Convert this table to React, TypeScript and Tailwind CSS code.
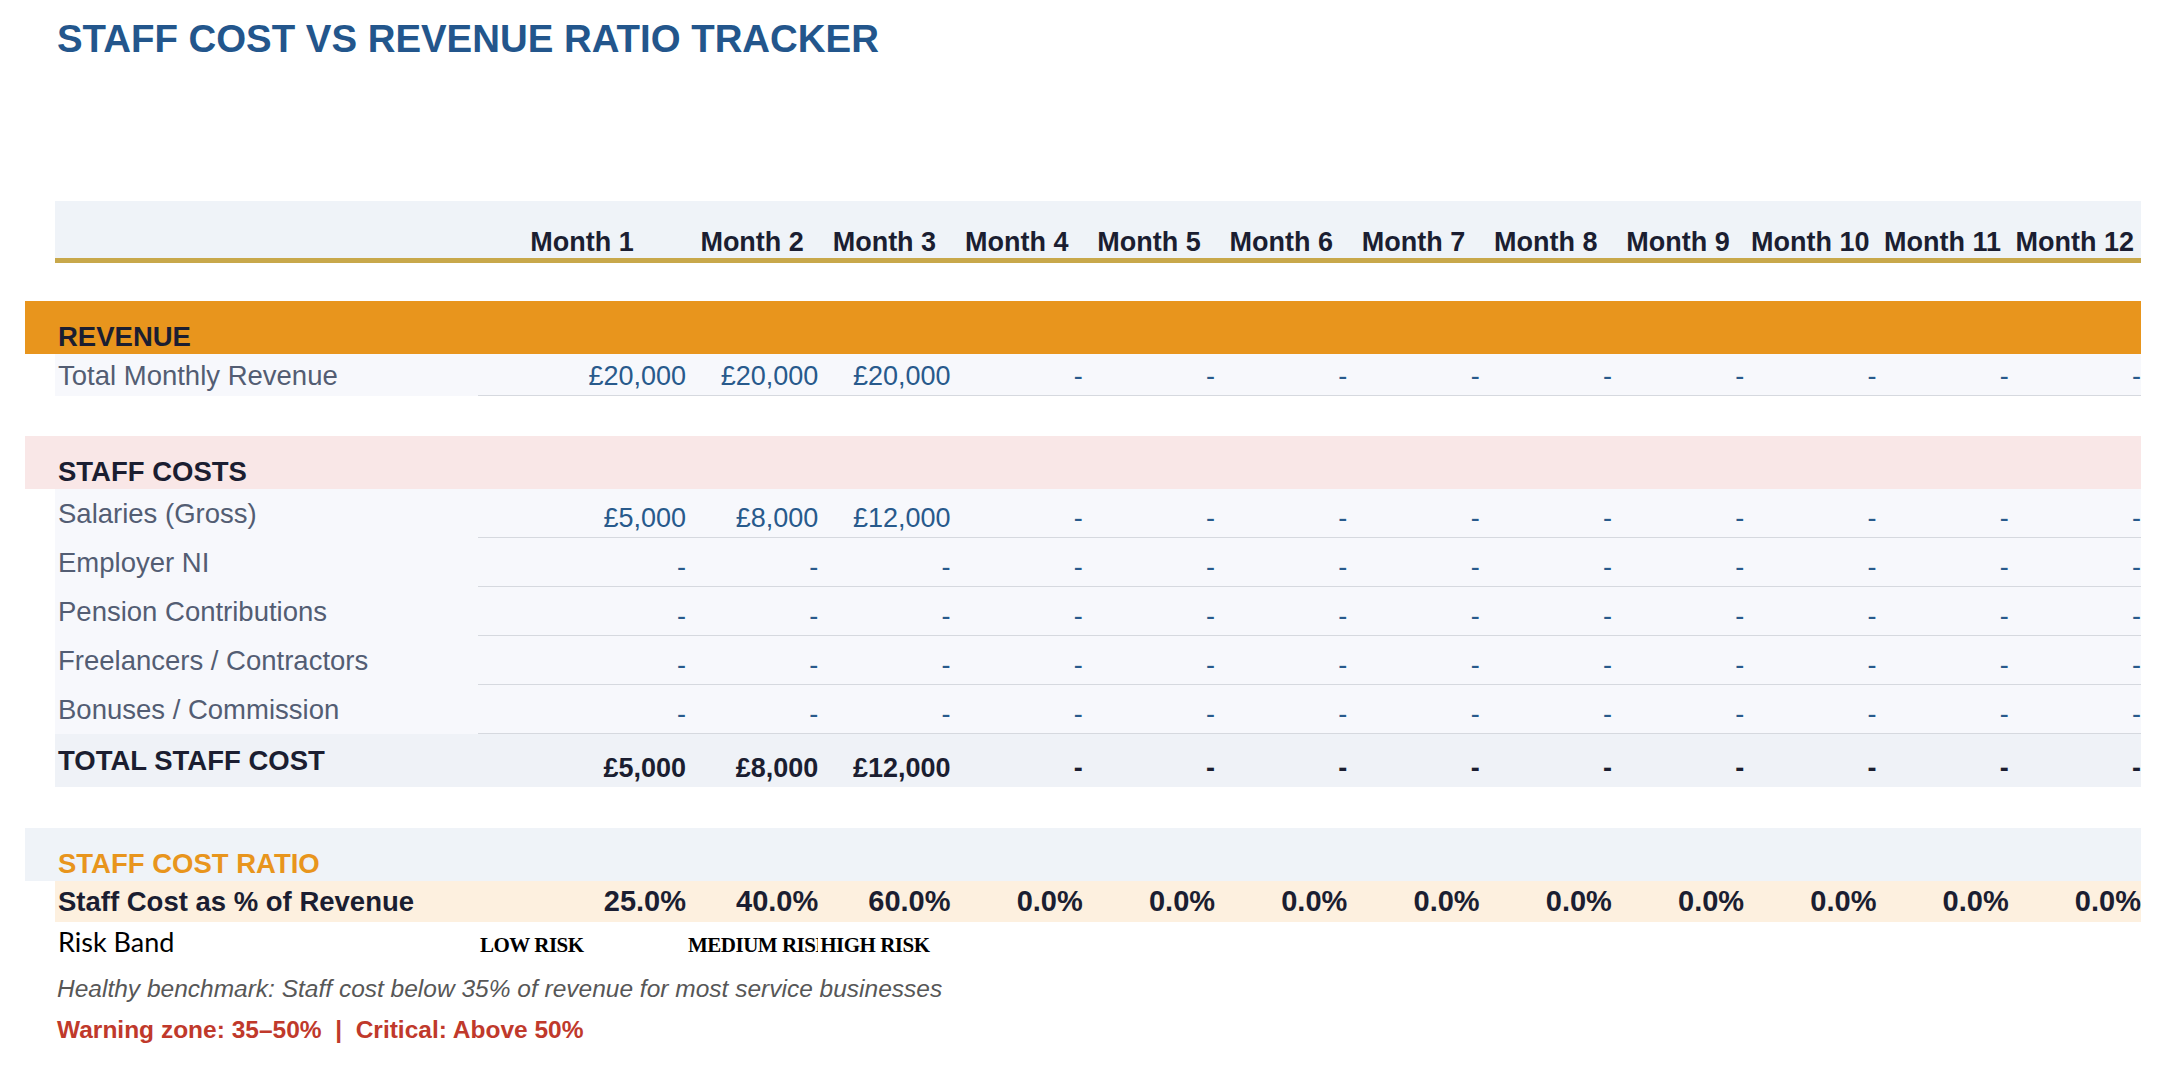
import React from "react";

const months = Array.from({ length: 12 }, (_, i) => `Month ${i + 1}`);

const pad = (vals: number[]) => [...vals, ...Array(12 - vals.length).fill(0)];

const revenue = pad([20000, 20000, 20000]);

const staffLines = [
  { label: "Salaries (Gross)", values: pad([5000, 8000, 12000]) },
  { label: "Employer NI", values: pad([]) },
  { label: "Pension Contributions", values: pad([]) },
  { label: "Freelancers / Contractors", values: pad([]) },
  { label: "Bonuses / Commission", values: pad([]) },
];

const totals = months.map((_, i) => staffLines.reduce((s, l) => s + l.values[i], 0));
const ratios = months.map((_, i) => (revenue[i] ? (totals[i] / revenue[i]) * 100 : 0));
const risks = ["LOW RISK", "MEDIUM RISK", "HIGH RISK"];

const money = (v: number) => (v ? `£${v.toLocaleString("en-GB")}` : "-");

const grid = "grid grid-cols-[30px_423px_208px_repeat(11,minmax(0,1fr))]";

function Band({ title, bg, color }: { title: string; bg: string; color: string }) {
  return (
    <div className={`${grid} h-[53px] ${bg}`}>
      <div />
      <div className={`col-span-13 flex items-end pl-[3px] pb-[4px] text-[27.5px] font-bold leading-none ${color}`}>
        {title}
      </div>
    </div>
  );
}

function LineRow({ label, values }: { label: string; values: number[] }) {
  return (
    <div className={`${grid} h-[49px]`}>
      <div />
      <div className="flex items-center bg-[#f7f8fc] pl-[3px] text-[27.5px] leading-none text-[#535d73]">{label}</div>
      {values.map((v, i) => (
        <div
          key={i}
          className="flex items-end justify-end border-b border-[#d6d9df] bg-[#f7f8fc] pb-[5px] text-[27px] leading-none text-[#285a8c]"
        >
          {money(v)}
        </div>
      ))}
    </div>
  );
}

export default function App() {
  return (
    <div className="min-h-screen bg-white font-['Liberation_Sans',Arial,sans-serif]">
      <div className="ml-[25px] w-[2116px]">
        {/* Title */}
        <h1 className="pl-[32px] pt-[20px] text-[38.4px] font-bold leading-none text-[#23568c]">
          STAFF COST VS REVENUE RATIO TRACKER
        </h1>

        {/* Month header */}
        <div className={`${grid} mt-[143px] h-[62px]`}>
          <div />
          <div className="col-span-13 grid grid-cols-[423px_208px_repeat(11,minmax(0,1fr))] border-b-[5px] border-[#c8a84b] bg-[#eff3f8]">
            <div />
            {months.map((m) => (
              <div key={m} className="flex items-end justify-center pb-[2px] text-[27px] font-bold leading-none text-[#1b1e31]">
                {m}
              </div>
            ))}
          </div>
        </div>

        {/* Revenue */}
        <div className="mt-[38px]">
          <Band title="REVENUE" bg="bg-[#e8951d]" color="text-[#1b1e31]" />
          <div className={`${grid} h-[42px]`}>
            <div />
            <div className="flex items-center bg-[#f7f8fc] pl-[3px] text-[27.5px] leading-none text-[#535d73]">
              Total Monthly Revenue
            </div>
            {revenue.map((v, i) => (
              <div
                key={i}
                className="flex items-end justify-end border-b border-[#d6d9df] bg-[#f7f8fc] pb-[5px] text-[27px] leading-none text-[#285a8c]"
              >
                {money(v)}
              </div>
            ))}
          </div>
        </div>

        {/* Staff costs */}
        <div className="mt-[40px]">
          <Band title="STAFF COSTS" bg="bg-[#f9e7e7]" color="text-[#1b1e31]" />
          {staffLines.map((l) => (
            <LineRow key={l.label} label={l.label} values={l.values} />
          ))}
          <div className={`${grid} h-[53px]`}>
            <div />
            <div className="col-span-13 grid grid-cols-[423px_208px_repeat(11,minmax(0,1fr))] bg-[#eff2f7]">
              <div className="flex items-center pl-[3px] text-[27.5px] font-bold leading-none text-[#1b1e31]">TOTAL STAFF COST</div>
              {totals.map((v, i) => (
                <div key={i} className="flex items-end justify-end pb-[5px] text-[27px] font-bold leading-none text-[#1b1e31]">
                  {money(v)}
                </div>
              ))}
            </div>
          </div>
        </div>

        {/* Ratio */}
        <div className="mt-[41px]">
          <Band title="STAFF COST RATIO" bg="bg-[#eff3f8]" color="text-[#e8951d]" />
          <div className={`${grid} h-[41px]`}>
            <div />
            <div className="col-span-13 grid grid-cols-[423px_208px_repeat(11,minmax(0,1fr))] bg-[#fdf0df]">
              <div className="flex items-center pl-[3px] text-[27.5px] font-bold leading-none text-[#1b1e31]">
                Staff Cost as % of Revenue
              </div>
              {ratios.map((r, i) => (
                <div key={i} className="flex items-end justify-end pb-[6px] text-[29px] font-bold leading-none text-[#1b1e31]">
                  {r.toFixed(1)}%
                </div>
              ))}
            </div>
          </div>
          <div className={`${grid} h-[44px] items-start`}>
            <div />
            <div className="pl-[3px] pt-[6px] font-['Lato',sans-serif] text-[27px] leading-none text-black">Risk Band</div>
            {months.map((m, i) => (
              <div
                key={m}
                className="overflow-hidden whitespace-nowrap pl-[2px] pt-[13px] font-['Liberation_Serif',serif] text-[21px] font-bold leading-none tracking-[-0.5px] text-black"
              >
                {risks[i] ?? ""}
              </div>
            ))}
          </div>
        </div>

        {/* Notes */}
        <div className="pl-[32px]">
          <p className="mt-[11px] text-[24.5px] italic leading-none text-[#575757]">
            Healthy benchmark: Staff cost below 35% of revenue for most service businesses
          </p>
          <p className="mt-[16px] whitespace-pre text-[24.5px] font-bold leading-none text-[#c0392b]">
            {"Warning zone: 35–50%  |  Critical: Above 50%"}
          </p>
        </div>
      </div>
    </div>
  );
}
